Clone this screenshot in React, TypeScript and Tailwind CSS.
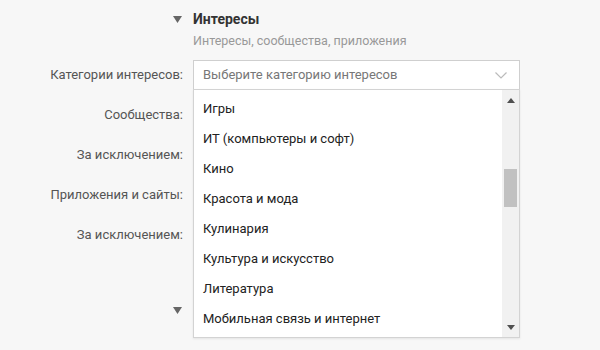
import React from 'react';

const categories = [
  'Игры',
  'ИТ (компьютеры и софт)',
  'Кино',
  'Красота и мода',
  'Кулинария',
  'Культура и искусство',
  'Литература',
  'Мобильная связь и интернет',
];

const labels = ['Сообщества:', 'За исключением:', 'Приложения и сайты:', 'За исключением:'];

const Caret = () => (
  <svg width="9" height="7" viewBox="0 0 9 7"><path d="M0 0 L9 0 L4.5 7 Z" fill="#666" /></svg>
);

const App: React.FC = () => {
  return (
    <div className="w-[600px] h-[350px] bg-[#f7f7f7] overflow-hidden font-['Roboto',sans-serif] text-[13px] relative">
      <div className="pt-[9px]">
        <div className="grid grid-cols-[183px_327px] gap-x-[10px]">
          <div className="h-[20px] flex items-center justify-end pr-[1px]"><Caret /></div>
          <div className="h-[20px] flex items-center font-bold text-[14px] text-[#333]">Интересы</div>
          <div />
          <div className="h-[20px] mt-[2px] flex items-center text-[#999] text-[12.5px]">Интересы, сообщества, приложения</div>
        </div>

        <div className="grid grid-cols-[183px_327px] gap-x-[10px] gap-y-[10px] mt-[9px]">
          <div className="h-[30px] flex items-center justify-end text-[#555]">Категории интересов:</div>
          <div className="h-[30px] bg-white border border-[#cfcfcf] flex items-center justify-between pl-[9px] pr-[12px] text-[#777]">
            <span>Выберите категорию интересов</span>
            <svg width="12" height="7" viewBox="0 0 12 7" fill="none" stroke="#bbb" strokeWidth="1.2">
              <path d="M0.5 0.5 L6 6 L11.5 0.5" />
            </svg>
          </div>
          {labels.map((l, i) => (
            <React.Fragment key={i}>
              <div className="h-[30px] flex items-center justify-end text-[#555]">{l}</div>
              <div className="h-[30px]" />
            </React.Fragment>
          ))}
        </div>

        <div className="grid grid-cols-[183px_327px] gap-x-[10px] mt-[50px]">
          <div className="h-[20px] flex items-center justify-end pr-[1px]"><Caret /></div>
          <div className="h-[20px]" />
        </div>
      </div>

      <div className="absolute left-[193px] top-[89px] w-[327px] h-[249px] bg-white border border-[#d3d3d3] shadow-[0_1px_2px_rgba(0,0,0,0.08)] flex">
        <div className="flex-1 pt-[4px]">
          {categories.map((c) => (
            <div key={c} className="h-[30px] flex items-center pl-[9px] text-[#222]">{c}</div>
          ))}
        </div>
        <div className="w-[17px] bg-[#f1f1f1] flex flex-col items-center">
          <div className="h-[20px] flex items-center justify-center">
            <svg width="8" height="5" viewBox="0 0 8 5"><path d="M0 5 L4 0 L8 5 Z" fill="#505050" /></svg>
          </div>
          <div className="h-[59px]" />
          <div className="w-[13px] h-[38px] bg-[#c1c1c1]" />
          <div className="flex-1" />
          <div className="h-[20px] flex items-center justify-center">
            <svg width="8" height="5" viewBox="0 0 8 5"><path d="M0 0 L8 0 L4 5 Z" fill="#505050" /></svg>
          </div>
        </div>
      </div>
    </div>
  );
};

export default App;
